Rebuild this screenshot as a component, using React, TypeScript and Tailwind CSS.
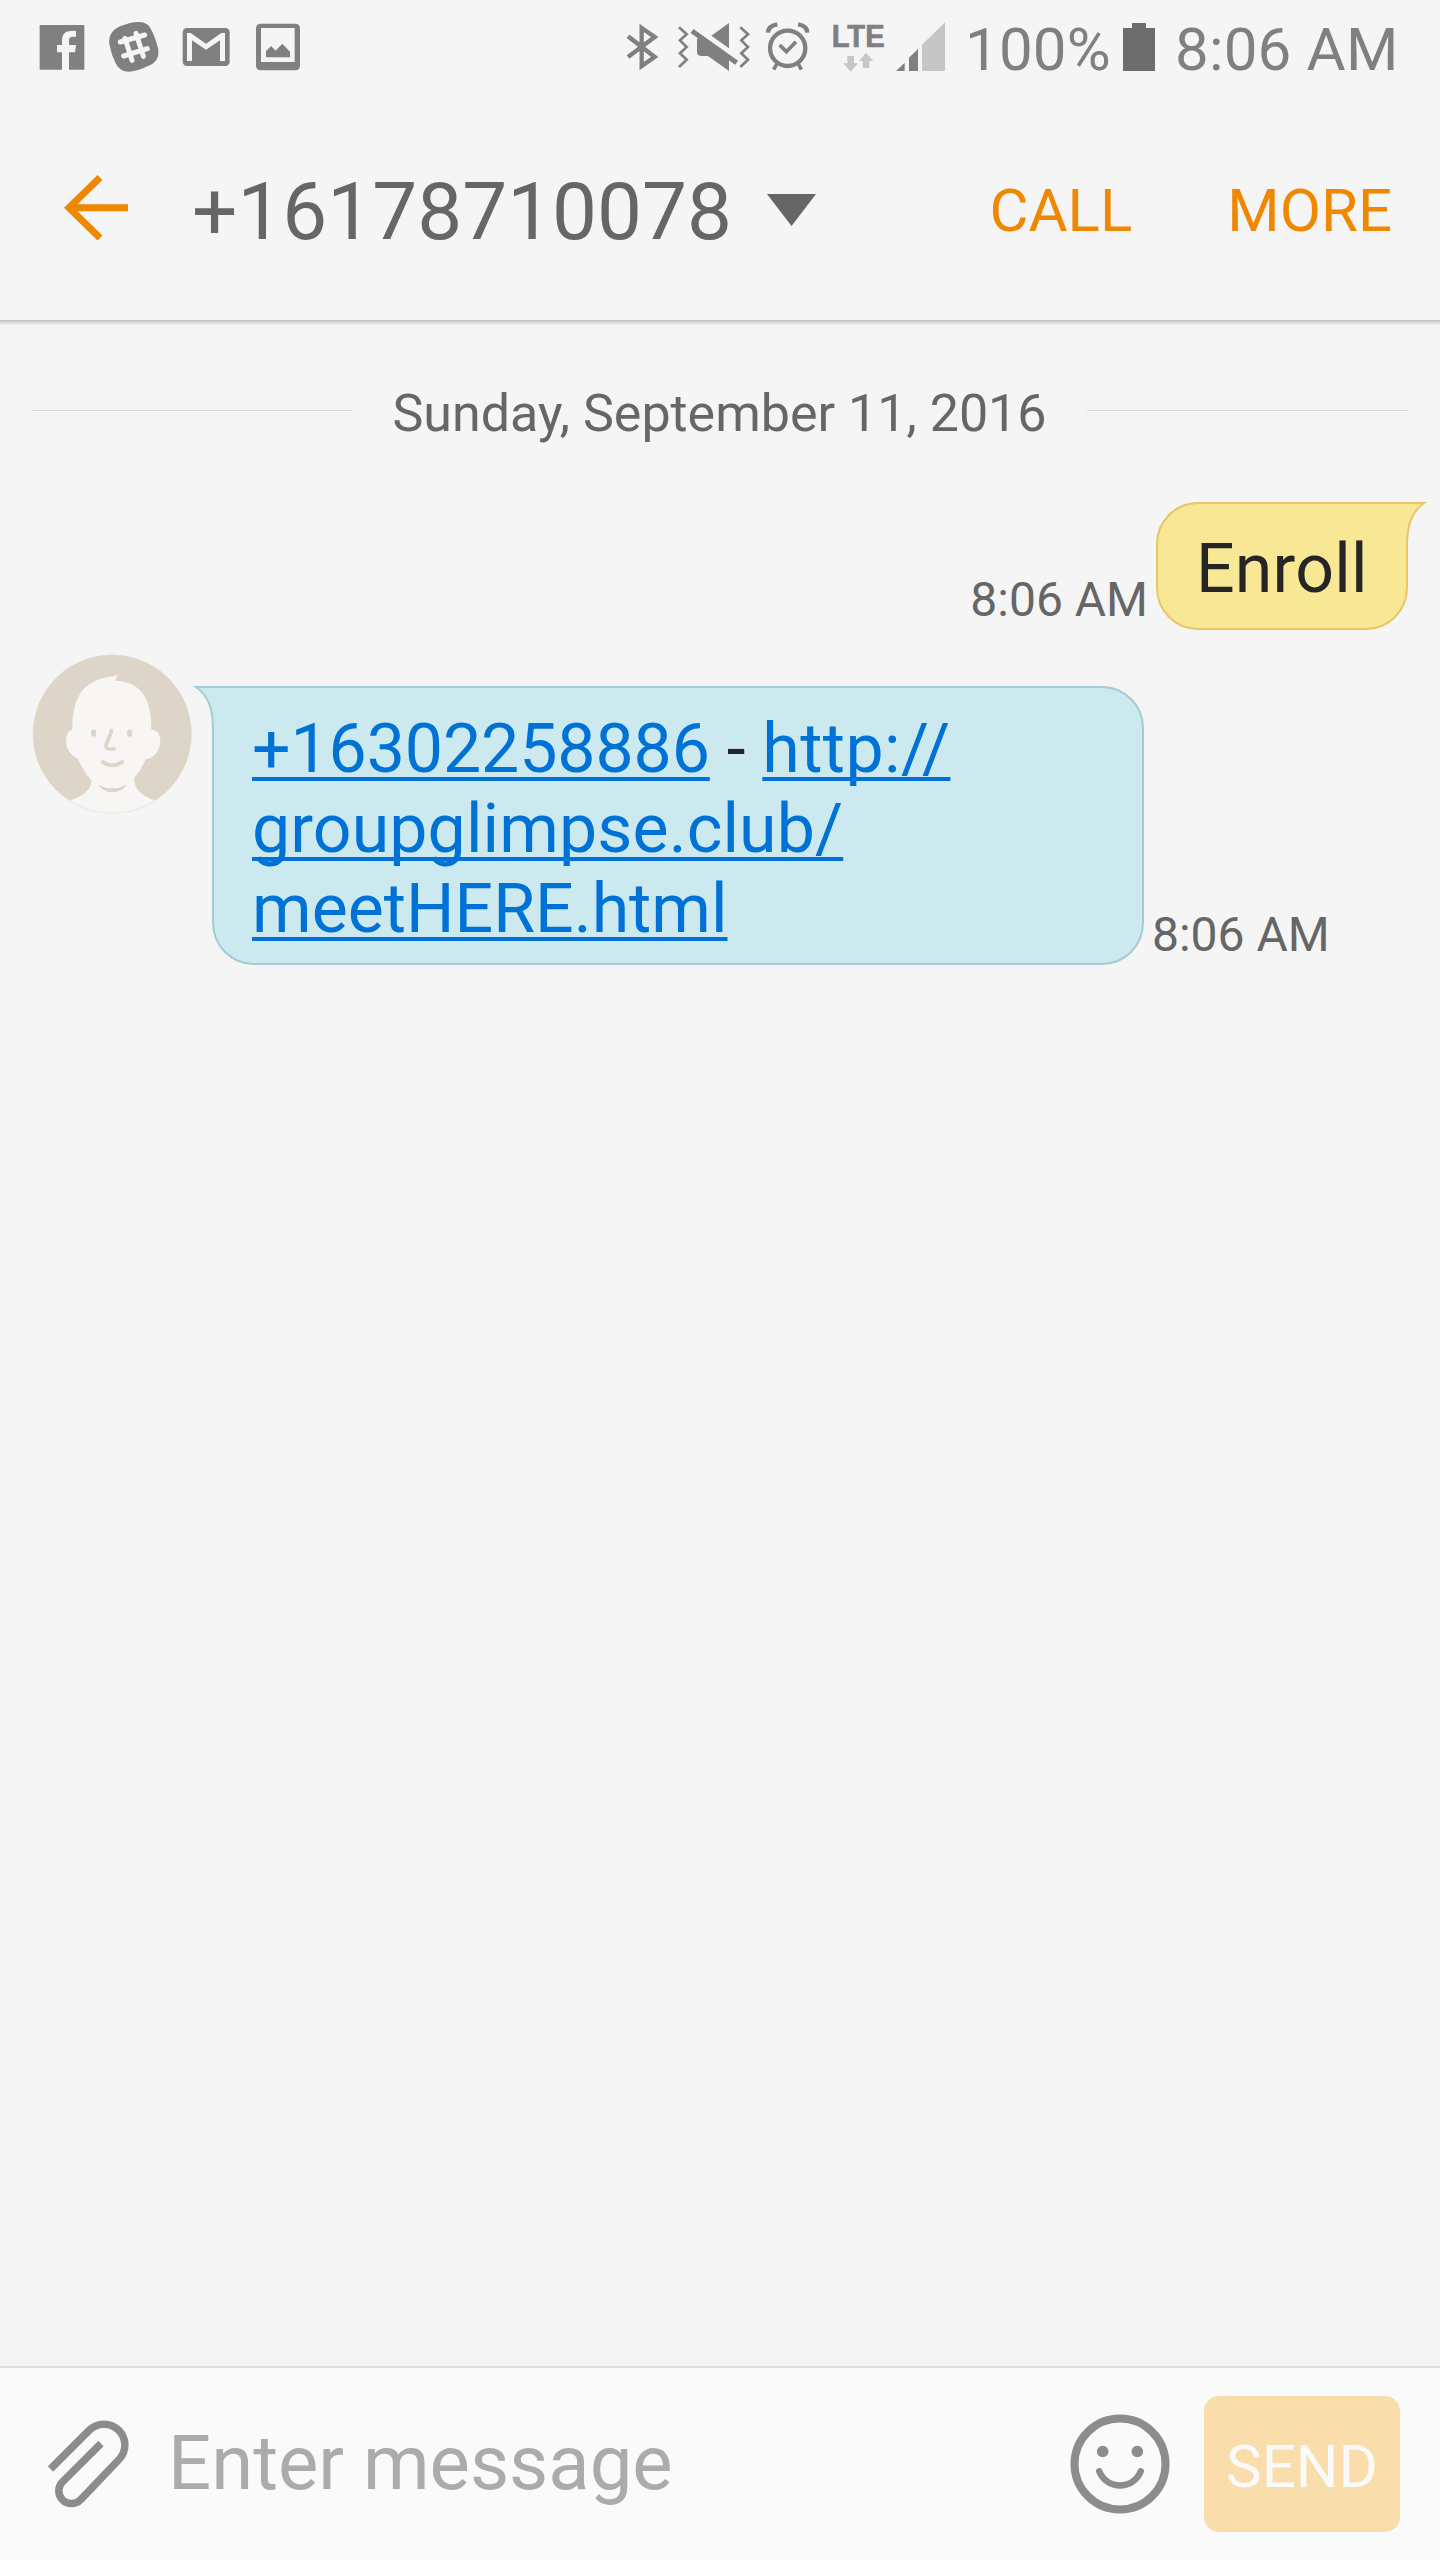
import React from "react";

const gray = "#808080";

function StatusBar() {
  return (
    <div className="flex h-[96px] shrink-0 items-start text-[60px] leading-[99px] text-[#808080]">
      <svg className="ml-[35px] h-[96px] w-[54px]" viewBox="45 0 162 288">
        <path fill={gray} d="M59 75H193V209H147V157H165L168 135H147V121Q147 110 158 110H168V93Q126 89 126 121V135H111V157H126V209H59Z" />
      </svg>
      <svg className="ml-[15px] h-[96px] w-[60px]" viewBox="252 0 180 288">
        <path fill={gray} d="M300 79Q372 51 391 84Q404 106 414 144Q421 180 391 195Q354 213 328 215Q301 216 288 192Q274 165 268 133Q264 94 300 79Z" />
        <path stroke="#f5f5f5" strokeWidth="15" strokeLinecap="round" fill="none" d="M315 115L336 181M348 100L370 169M301 126L374 105M311 168L382 146" />
      </svg>
      <svg className="ml-[14px] h-[96px] w-[60px]" viewBox="474 0 180 288">
        <rect x="488" y="84" width="141" height="114" rx="13" fill={gray} />
        <path fill="#f5f5f5" d="M501 183V99H512L558 131L604 99H615V183H600V121L558 149L516 121V183Z" />
      </svg>
      <svg className="ml-[13px] h-[96px] w-[60px]" viewBox="693 0 180 288">
        <rect x="708" y="71" width="132" height="140" rx="13" fill={gray} />
        <path fill="#f5f5f5" d="M723 84H824V186H723Z" />
        <path fill={gray} d="M738 172V153L753 138L767 152L787 131L810 155V172Z" />
      </svg>
      <div className="grow" />
      <svg className="h-[96px] w-[35px]" viewBox="45 0 105 288">
        <path fill="none" stroke={gray} strokeWidth="13" d="M54 109L134 171L95 198V84L134 111L54 171" />
      </svg>
      <svg className="ml-[15px] h-[96px] w-[80px]" viewBox="195 0 240 288">
        <path fill="none" stroke={gray} strokeWidth="8" d="M207 82L230 103L210 121L230 141L210 160L230 179L207 201M391 82L414 103L394 121L414 141L394 160L414 179L391 201" />
        <path fill={gray} d="M357 69V145L304 107ZM261 118Q263 113 268 114L357 176V213L294 168H272Q261 166 261 155Z" />
        <path stroke={gray} strokeWidth="15" d="M246 93L380 188" />
      </svg>
      <svg className="ml-[10px] h-[96px] w-[45px]" viewBox="465 0 135 288">
        <g fill="none" stroke={gray}>
          <circle cx="533" cy="145" r="53" strokeWidth="13" />
          <path strokeWidth="11" d="M509 135L529 155L558 125M500 192L491 209M565 192L574 209" />
          <path strokeWidth="13" d="M474 98Q475 77 502 73M592 98Q591 77 564 73" />
        </g>
      </svg>
      <svg className="ml-[15px] h-[96px] w-[65px]" viewBox="645 0 195 288">
        <text x="665" y="140" textLength="159" lengthAdjust="spacingAndGlyphs" fill={gray} stroke={gray} strokeWidth="2" fontFamily="Liberation Sans, sans-serif" fontWeight="700" fontSize="92">LTE</text>
        <path fill="#c6c6c6" d="M712 168H732V190H744L722 215L700 190H712ZM758 204V183H747L768 158L790 183H778V204Z" />
      </svg>
      <svg className="ml-[4px] h-[96px] w-[54px]" viewBox="852 0 162 288">
        <path fill={gray} d="M858 213L884 188V213ZM897 213V173L924 147V213Z" />
        <path fill="#c6c6c6" d="M936 213V134L1005 67V213Z" />
      </svg>
      <span className="ml-[17px] w-[158px] tracking-[0.2px]">100%</span>
      <svg className="h-[96px] w-[32px]" viewBox="0 0 32 96">
        <path fill="#6d6d6d" d="M0 28H9V23H23V28H32V71H0Z" />
      </svg>
      <span className="ml-[20px] mr-[43px] w-[222px] whitespace-nowrap tracking-[0.2px]">8:06 AM</span>
    </div>
  );
}

function Header() {
  return (
    <header className="flex h-[224px] shrink-0 items-center pr-[48px] text-[#ef8700]">
      <svg className="ml-[61px] h-[80px] w-[72px]" viewBox="60 168 72 80">
        <path fill="none" stroke="#ef8700" strokeWidth="7" d="M99 177.500L68 207.700L99 238M67.500 207.700H127" />
      </svg>
      <h1 className="ml-[59px] pt-[7px] text-[80px] leading-[100px] text-[#666666]">+16178710078</h1>
      <svg className="ml-[35px] mt-[4px] h-[32px] w-[49px]" viewBox="0 0 49 32">
        <path fill="#666666" d="M0 0H49L24.500 32Z" />
      </svg>
      <nav className="ml-auto flex gap-[95px] pt-[5px] text-[60px] leading-[80px]">
        <span>CALL</span>
        <span>MORE</span>
      </nav>
    </header>
  );
}

function Avatar() {
  return (
    <svg className="h-[170px] w-[170px]" viewBox="30 30 510 510">
      <defs>
        <clipPath id="avatar-circle">
          <circle cx="276.500" cy="282" r="238" />
        </clipPath>
      </defs>
      <circle cx="276.500" cy="282" r="238" fill="#dcd5c8" />
      <g clipPath="url(#avatar-circle)">
        <path fill="#f8f6f4" d="M157 270C157 190 176 117 283 109Q290 106 291 101Q293 112 284 122C370 124 395 185 394 270C411 268 421 283 421 302C419 335 400 356 377 357Q364 390 342 415C343 450 368 470 406 482L420 540H130L147 482C195 468 214 446 215 421Q188 392 174 356C150 346 138 325 138 300C138 282 147 271 157 270Z" />
        <g fill="none" stroke="#dcd5c8" strokeLinecap="round" strokeLinejoin="round">
          <path strokeWidth="15" d="M221 275V283M329 275V283" />
          <path strokeWidth="11" d="M274 271C274 288 258 303 258 318Q258 328 269 327H283" />
          <path strokeWidth="12" d="M249 366C265 379 290 379 306 366" />
        </g>
        <path fill="#dcd5c8" d="M235 434Q277 456 320 434Q305 456 277 456Q250 456 235 434Z" />
      </g>
      <circle cx="276.500" cy="282" r="237.500" fill="none" stroke="#e4dfd5" strokeWidth="1.500" />
    </svg>
  );
}

function Thread() {
  return (
    <main className="flex grow flex-col">
      <div className="h-px bg-[#c2c2c2]" />
      <div className="h-[4px] bg-linear-to-b from-[#cccccc] to-[#f5f5f5]" />
      <div className="mx-[32px] mt-[59px] flex h-[60px] items-center">
        <div className="mb-[8px] h-px w-[320px] bg-[#d6d6d6]" />
        <span className="grow text-center text-[52px] leading-[60px] text-[#666666]">Sunday, September 11, 2016</span>
        <div className="mb-[8px] h-px w-[321px] bg-[#d6d6d6]" />
      </div>

      <div className="mr-[32px] mt-[58px] flex h-[128px] items-end justify-end">
        <span className="mr-[8px] text-[48px] leading-[60px] text-[#666666]">8:06 AM</span>
        <div className="relative flex h-[128px] w-[252px] items-center rounded-l-[42px] rounded-br-[42px] border-2 border-[#e9c568] bg-[#f8e794] pl-[38px] pt-[6px] text-[68px] tracking-[0.2px] text-[#252525]">
          Enroll
          <svg className="absolute -right-[22px] -top-[2px] h-[44px] w-[26px]" viewBox="0 0 26 44">
            <path fill="#f8e794" d="M0 0H23C9 10 5 24 5 44H0Z" />
            <path fill="none" stroke="#e9c568" strokeWidth="2" d="M0 1H22C9 10 5 24 5 44" />
          </svg>
        </div>
      </div>

      <div className="mt-[20px] flex items-start pl-[30px]">
        <Avatar />
        <div className="relative ml-[12px] mt-[36px] h-[279px] w-[932px] rounded-r-[42px] rounded-bl-[42px] border-2 border-[#a3ccd3] bg-[#cbe9ee] pl-[38px] pt-[21px] text-[68px] leading-[80px] text-[#252525]">
          <svg className="absolute -left-[22px] -top-[2px] h-[44px] w-[26px]" viewBox="0 0 26 44">
            <path fill="#cbe9ee" d="M26 0H3C17 10 21 24 21 44H26Z" />
            <path fill="none" stroke="#a3ccd3" strokeWidth="2" d="M26 1H4C17 10 21 24 21 44" />
          </svg>
          <p className="whitespace-nowrap [text-decoration-skip-ink:none]">
            <a className="tracking-[-0.1px] text-[#0072d6] underline decoration-[4px] underline-offset-[5px]">+16302258886</a>
            {" - "}
            <a className="text-[#0072d6] underline decoration-[4px] underline-offset-[5px]">
              <span className="tracking-[0.4px]">http://</span><br />
              <span className="tracking-[0.12px]">groupglimpse.club/</span><br />
              meetHERE.html
            </a>
          </p>
        </div>
        <span className="ml-[8px] mt-[255px] text-[48px] leading-[60px] text-[#666666]">8:06 AM</span>
      </div>
    </main>
  );
}

function Composer() {
  return (
    <footer className="flex h-[194px] shrink-0 items-center border-t-2 border-[#dedede] bg-[#fafafa] pr-[40px]">
      <svg className="ml-[40px] h-[100px] w-[100px]" viewBox="40 2414 100 100">
        <path fill="none" stroke="#8c8c8c" strokeWidth="7.500" d="M50.500 2469L89 2430.500A20.500 20.500 0 0 1 119 2459.500L80.500 2499.800A12.700 12.700 0 0 1 62.500 2481.800L101 2443.500" />
      </svg>
      <span className="ml-[28px] grow pb-[2px] text-[76px] leading-[90px] text-[#ababab]">Enter message</span>
      <svg className="h-[100px] w-[100px]" viewBox="1070 2414 100 100">
        <circle cx="1120" cy="2464" r="45.500" fill="none" stroke="#8c8c8c" strokeWidth="8" />
        <circle cx="1102.700" cy="2451.500" r="5.800" fill="#8c8c8c" />
        <circle cx="1137.300" cy="2451.500" r="5.800" fill="#8c8c8c" />
        <path fill="none" stroke="#8c8c8c" strokeWidth="6.500" strokeLinecap="round" d="M1099.300 2471.300A22.200 22.200 0 0 0 1140.700 2471.300" />
      </svg>
      <button className="ml-[34px] flex h-[136px] w-[196px] items-center justify-center rounded-[15px] bg-[#f9deac] pt-[5px] text-[60px] leading-[80px] text-[#fafafa]">SEND</button>
    </footer>
  );
}

export default function App() {
  return (
    <div className="flex h-[2560px] w-[1440px] flex-col overflow-hidden bg-[#f5f5f5] font-['Roboto',sans-serif]">
      <StatusBar />
      <Header />
      <Thread />
      <Composer />
    </div>
  );
}
